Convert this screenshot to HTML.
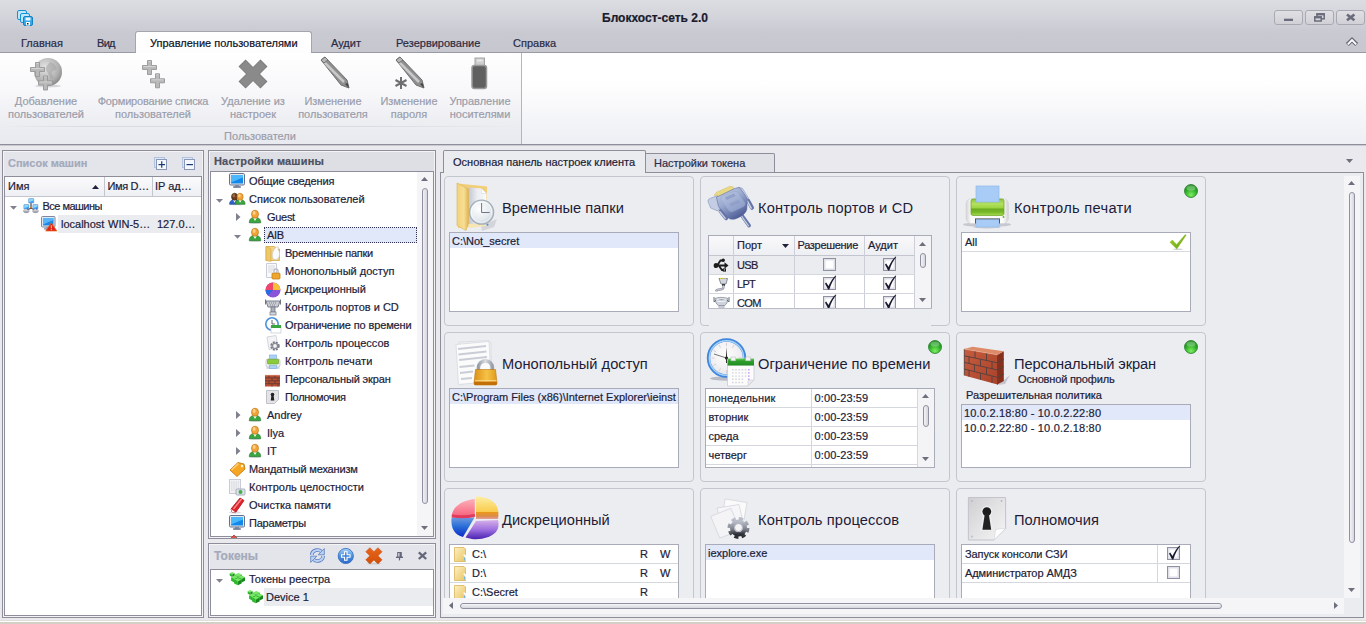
<!DOCTYPE html><html><head><meta charset="utf-8"><title>Блокхост-сеть 2.0</title><style>
*{box-sizing:border-box;margin:0;padding:0}
html,body{width:1366px;height:624px;overflow:hidden}
body{position:relative;background:#eaeaee;font-family:"Liberation Sans","DejaVu Sans",sans-serif;font-size:11px;color:#1c1c38;line-height:13px}
.a{position:absolute}
.t{position:absolute;white-space:nowrap;line-height:13px;-webkit-text-stroke:.2px}
.c{text-align:center}
.g{color:#9b9dab}
svg{position:absolute;overflow:visible}
#tb{left:0;top:0;width:1366px;height:53px;background:linear-gradient(#dcdde2,#d1d2d9 40%,#c8c9d1 64%,#c6c7cf);border-bottom:1px solid #9a9aa4}
.wb{top:10px;width:29px;height:15px;border:1px solid #a9a9b3;border-radius:3px;background:linear-gradient(#e0e0e4,#d0d0d6)}
#rb{left:0;top:53px;width:1366px;height:91px;background:linear-gradient(#ffffff,#fefefe 35%,#f4f5f8 72%,#eeeff4)}
#rg{left:0;top:53px;width:521px;height:91px;background:linear-gradient(#ffffff,#f7f7fa 45%,#ecedf1 80%,#e9eaef)}
.pn{border:1px solid #8d8e9a;background:#e4e5ea;box-shadow:inset 0 0 0 1px #f4f4f7}
.tr{border:1px solid #8d8e9a;background:#fff}
.card{border:1px solid #c4c6cf;border-radius:4px;background:#ecedf1;width:250px;height:150px}
.lb{border:1px solid #a9abb9;background:#fff}
.h1{font-size:14.67px;line-height:20px;color:#1c1c38;-webkit-text-stroke:0}
.sel{background:#e1e8fa}
.cb{width:13px;height:13px;border:1px solid #8f91a0;background:#fff;box-shadow:inset 0 0 0 2px #dcdde6}
</style></head><body><div id="tb" class="a"></div>
<svg style="left:17px;top:10px" width="16" height="16" viewBox="0 0 16 16"><rect x="0.5" y="0.5" width="9" height="9" rx="1.5" fill="#bfe6fb" stroke="#1592d6"/>
<rect x="3.5" y="3.5" width="9" height="9" rx="1.5" fill="#bfe6fb" stroke="#1592d6"/>
<rect x="6.5" y="6.5" width="9" height="9" rx="1.5" fill="#35a9e8" stroke="#1283c4"/>
<rect x="8.5" y="7.5" width="5" height="3" fill="#e8f6fe"/><rect x="9" y="12" width="4" height="3.5" fill="#fff"/><rect x="10" y="13" width="1.5" height="1.5" fill="#222"/></svg>
<div class="t c " style="left:505.0px;width:300px;top:12px;font-weight:bold;color:#1a1a2c;font-size:12px">Блокхост-сеть 2.0</div>
<div class="a wb" style="left:1274px"></div>
<div class="a wb" style="left:1305px"></div>
<div class="a wb" style="left:1336px"></div>
<svg style="left:0px;top:0px" width="1366" height="53" viewBox="0 0 1366 53"><rect x="1284" y="18.700" width="9" height="2.300" fill="#6a6c7c"/>
<rect x="1317" y="14" width="7.200" height="4.800" fill="none" stroke="#6a6c7c" stroke-width="1.500"/><rect x="1316.300" y="13.200" width="8.600" height="2.200" fill="#6a6c7c"/>
<rect x="1314.800" y="17" width="6.400" height="4" fill="#d6d6db" stroke="#6a6c7c" stroke-width="1.500"/><rect x="1314" y="16.200" width="8" height="2.200" fill="#6a6c7c"/>
<path d="M1347 14.500l7.400 5.800M1354.400 14.500l-7.400 5.800" stroke="#6a6c7c" stroke-width="2.700" fill="none"/></svg>
<div class="a " style="left:135px;top:31px;width:177px;height:23px;background:linear-gradient(#ffffff,#fdfdfe);border:1px solid #a5a5af;border-bottom:none;border-radius:3px 3px 0 0"></div>
<div class="t " style="left:21px;top:37px;color:#2a2a44">Главная</div>
<div class="t " style="left:97px;top:37px;color:#2a2a44;letter-spacing:-0.7px">Вид</div>
<div class="t " style="left:150px;top:37px;color:#101024">Управление пользователями</div>
<div class="t " style="left:331px;top:37px;color:#2a2a44">Аудит</div>
<div class="t " style="left:396px;top:37px;color:#2a2a44">Резервирование</div>
<div class="t " style="left:513px;top:37px;color:#2a2a44">Справка</div>
<svg style="left:0px;top:0px" width="1366" height="53" viewBox="0 0 1366 53"><path d="M1347.300 44.600l4.700-4.700l4.700 4.700" stroke="#6a6c7c" stroke-width="4.200" fill="none" stroke-linejoin="miter"/><path d="M1347.800 44.300l4.200-4.200l4.200 4.200" stroke="#fff" stroke-width="1.800" fill="none"/></svg>
<div id="rb" class="a"></div><div id="rg" class="a"></div>
<div class="a " style="left:521px;top:53px;width:1px;height:91px;background:#b4b5be"></div>
<div class="a " style="left:0px;top:144px;width:1366px;height:1px;background:#8e8f9a"></div>
<div class="a " style="left:0px;top:145px;width:1366px;height:1px;background:#c9cad2"></div>
<div class="a " style="left:5px;top:126px;width:512px;height:1px;background:linear-gradient(90deg,rgba(220,221,228,0),#d9dae2 15%,#d9dae2 70%,rgba(220,221,228,0))"></div>
<div class="t c g" style="left:-54.0px;width:200px;top:95px;">Добавление</div>
<div class="t c g" style="left:-54.0px;width:200px;top:108px;">пользователей</div>
<div class="t c g" style="left:53.0px;width:200px;top:95px;;letter-spacing:-0.18px">Формирование списка</div>
<div class="t c g" style="left:53.0px;width:200px;top:108px;">пользователей</div>
<div class="t c g" style="left:153.0px;width:200px;top:95px;">Удаление из</div>
<div class="t c g" style="left:153.0px;width:200px;top:108px;">настроек</div>
<div class="t c g" style="left:233.0px;width:200px;top:95px;">Изменение</div>
<div class="t c g" style="left:233.0px;width:200px;top:108px;">пользователя</div>
<div class="t c g" style="left:309.0px;width:200px;top:95px;">Изменение</div>
<div class="t c g" style="left:309.0px;width:200px;top:108px;">пароля</div>
<div class="t c g" style="left:380.0px;width:200px;top:95px;">Управление</div>
<div class="t c g" style="left:380.0px;width:200px;top:108px;">носителями</div>
<div class="t c g" style="left:160.0px;width:200px;top:130px;">Пользователи</div>
<svg style="left:0px;top:0px" width="1366" height="145" viewBox="0 0 1366 145"><defs><radialGradient id="gl" cx="0.4" cy="0.35" r="0.7"><stop offset="0" stop-color="#e6e6e6"/><stop offset=".7" stop-color="#b0b0b0"/><stop offset="1" stop-color="#858585"/></radialGradient></defs><ellipse cx="48" cy="86" rx="13" ry="1.500" fill="#d6d6da"/><circle cx="48" cy="72" r="14" fill="url(#gl)"/><path d="M50 62c4 1 6 4 7 7c-2 2-4 1-5 3c-1 3 2 4 1 7c-3 0-4-3-5-6c-1-2-3-3-2-6c1-2 3-3 4-5z" fill="#a2a2a2" opacity=".55"/><path d="M35.5 62.5h4v5.0h5.0v4h-5.0v5.0h-4v-5.0h-5.0v-4h5.0z" fill="#b9b9b9" stroke="#969696" stroke-width=".9"/><path d="M36.5 63.5h2M31.5 68.5h12" stroke="#d6d6d6" stroke-width=".9"/><path d="M43.5 76h4v5.0h5.0v4h-5.0v5.0h-4v-5.0h-5.0v-4h5.0z" fill="#b9b9b9" stroke="#969696" stroke-width=".9"/><path d="M44.5 77h2M39.5 82.0h12" stroke="#d6d6d6" stroke-width=".9"/><path d="M147.5 60.5h4v5.0h5.0v4h-5.0v5.0h-4v-5.0h-5.0v-4h5.0z" fill="#b9b9b9" stroke="#969696" stroke-width=".9"/><path d="M148.5 61.5h2M143.5 66.5h12" stroke="#d6d6d6" stroke-width=".9"/><path d="M155.5 73.8h4v5.0h5.0v4h-5.0v5.0h-4v-5.0h-5.0v-4h5.0z" fill="#b9b9b9" stroke="#969696" stroke-width=".9"/><path d="M156.5 74.8h2M151.5 79.8h12" stroke="#d6d6d6" stroke-width=".9"/><g transform="translate(253,74) rotate(45)"><path d="M-4.5 -15h9v10.5h10.5v9h-10.5v10.5h-9v-10.5h-10.5v-9h10.5z" fill="#8a8a8a" stroke="#7a7a7a"/></g><g transform="translate(318,57)"><path d="M3 3l4-3l22 23l2 8l-8-3z" fill="#8f8f8f" stroke="#707070" stroke-width="1"/><path d="M5 4l21 21" stroke="#c9c9c9" stroke-width="2.5"/><path d="M27 27l4 4l-1.500-5z" fill="#444"/><path d="M3 3l4-3l3 3l-4 3z" fill="#b5b5b5" stroke="#707070"/></g><g transform="translate(393,57)"><path d="M3 3l4-3l22 23l2 8l-8-3z" fill="#8f8f8f" stroke="#707070" stroke-width="1"/><path d="M5 4l21 21" stroke="#c9c9c9" stroke-width="2.5"/><path d="M27 27l4 4l-1.500-5z" fill="#444"/><path d="M3 3l4-3l3 3l-4 3z" fill="#b5b5b5" stroke="#707070"/></g><g stroke="#6f6f6f" stroke-width="2" transform="translate(401,83)"><path d="M0 -6v12M-5.500 -3l11 6M-5.500 3l11-6"/></g><rect x="475" y="58" width="9.500" height="9" fill="#cdcdcd" stroke="#a4a4a4"/><rect x="477" y="59.500" width="5.500" height="2" fill="#e9e9e9"/><rect x="472" y="65.500" width="14.500" height="23" rx="2.500" fill="#606060" stroke="#999" stroke-width="1.500"/></svg>
<div class="a pn" style="left:2px;top:150px;width:202px;height:468px;"></div>
<div class="t " style="left:8px;top:157px;font-weight:bold;color:#a4aabb">Список машин</div>
<svg style="left:154px;top:157px" width="14" height="14" viewBox="0 0 14 14"><rect x="0.5" y="0.5" width="10" height="10" fill="#dbe7f6" stroke="#b3c3dc"/><rect x="2.500" y="2.500" width="10" height="10" fill="#f4f8fd" stroke="#8a97b9"/><path d="M4.500 7.600h6.500" stroke="#1c3a70" stroke-width="1.200"/><path d="M7.750 4.300v6.500" stroke="#1c3a70" stroke-width="1.200"/></svg>
<svg style="left:182px;top:157px" width="14" height="14" viewBox="0 0 14 14"><rect x="0.5" y="0.5" width="10" height="10" fill="#dbe7f6" stroke="#b3c3dc"/><rect x="2.500" y="2.500" width="10" height="10" fill="#f4f8fd" stroke="#8a97b9"/><path d="M4.500 7.600h6.500" stroke="#1c3a70" stroke-width="1.200"/></svg>
<div class="a tr" style="left:4px;top:176px;width:198px;height:440px;"></div>
<div class="a " style="left:5px;top:177px;width:196px;height:20px;background:linear-gradient(#fbfbfc,#eeeff3);border-bottom:1px solid #c3c5cf"></div>
<div class="a " style="left:104px;top:177px;width:1px;height:19px;background:#c3c5cf"></div>
<div class="a " style="left:152px;top:177px;width:1px;height:19px;background:#c3c5cf"></div>
<div class="t " style="left:8px;top:180px;">Имя</div>
<div class="t " style="left:107.5px;top:180px;letter-spacing:-.35px">Имя D…</div>
<div class="t " style="left:155px;top:180px;">IP ад…</div>
<svg style="left:92px;top:185px" width="7" height="4" viewBox="0 0 7 4"><path d="M0 4L3.5 0L7 4z" fill="#20203a"/></svg>
<svg style="left:10.0px;top:206px" width="7" height="4" viewBox="0 0 7 4"><path d="M0 0L7 0L3.5 3.8z" fill="#7f818e"/></svg>
<svg style="left:23px;top:198px" width="16" height="16" viewBox="0 0 16 16"><defs><linearGradient id="nb" x1="0" y1="0" x2="0" y2="1"><stop offset="0" stop-color="#f4f4f8"/><stop offset="1" stop-color="#7d8090"/></linearGradient></defs><path d="M8 4.500v5.500M8 10l-3.500 2M8 10l3.500 2" stroke="#1c1c1c" stroke-width="1" fill="none"/><rect x="7.300" y="8.800" width="1.500" height="1.500" fill="#e8a020"/><rect x="7.500" y="9.600" width="1" height="1" fill="#e02020"/><rect x="5.6" y="0.5" width="5.200" height="4.600" rx=".6" fill="#3aa0f2" stroke="#7f9cc8" stroke-width=".5"/><path d="M6.1 1.0h4.200v1.600l-4.200 1.600z" fill="#9be0ff" opacity=".85"/><rect x="0.8" y="6.5" width="5.200" height="4.600" rx=".6" fill="#3aa0f2" stroke="#7f9cc8" stroke-width=".5"/><path d="M1.3 7.0h4.200v1.600l-4.200 1.600z" fill="#9be0ff" opacity=".85"/><rect x="9.8" y="6.5" width="5.200" height="4.600" rx=".6" fill="#3aa0f2" stroke="#7f9cc8" stroke-width=".5"/><path d="M10.3 7.0h4.200v1.600l-4.200 1.600z" fill="#9be0ff" opacity=".85"/><ellipse cx="3.300" cy="13" rx="3" ry="1.800" fill="url(#nb)" stroke="#8d90a0" stroke-width=".4"/><ellipse cx="12.500" cy="13" rx="3" ry="1.800" fill="url(#nb)" stroke="#8d90a0" stroke-width=".4"/><circle cx="4.600" cy="11" r=".5" fill="#1030c0"/><circle cx="13.700" cy="11" r=".5" fill="#1030c0"/></svg>
<div class="t " style="left:42.5px;top:200px;;letter-spacing:-0.53px">Все машины</div>
<div class="a " style="left:58px;top:215px;width:143px;height:18px;background:#ebecf0"></div>
<svg style="left:41px;top:216px" width="18" height="17" viewBox="0 0 18 17"><rect x="0.5" y="0.5" width="13.500" height="10.500" rx="1" fill="#e4e8ef" stroke="#7d879d"/>
<rect x="2" y="2" width="10.500" height="7.500" fill="#1e86e6"/><path d="M2 2h10.500v2l-10.500 4.500z" fill="#6cc4ff" opacity=".75"/>
<rect x="4.500" y="11" width="4" height="1.300" fill="#9aa3b5"/><rect x="3" y="12.300" width="7" height="1.200" fill="#7e8799"/>
<path d="M10.300 6.800l5.600 8.200h-11.200z" fill="#e8201c" stroke="#e06a1c" stroke-width=".7" stroke-linejoin="round"/><rect x="9.800" y="9.300" width="1.100" height="3" fill="#c8e83a"/><rect x="9.800" y="13" width="1.100" height="1.100" fill="#c8e83a"/></svg>
<div class="t " style="left:61px;top:218px;">localhost</div>
<div class="t " style="left:108px;top:218px;">WIN-5…</div>
<div class="t " style="left:157px;top:218px;">127.0…</div>
<div class="a pn" style="left:208px;top:150px;width:228px;height:389px;background:#dedfe4"></div>
<div class="t " style="left:214px;top:155px;font-weight:bold;color:#4d5160;letter-spacing:0.18px">Настройки машины</div>
<div class="a tr" style="left:210px;top:171px;width:224px;height:366px;overflow:hidden"></div>
<svg style="left:229px;top:173px" width="16" height="17" viewBox="0 0 16 17"><rect x="0.5" y="0.5" width="15" height="11.500" rx="1.200" fill="#e4e9f0" stroke="#64708a"/>
<rect x="2" y="2" width="12" height="8.500" fill="#1487ea"/><path d="M2 2h12v2.500l-12 5z" fill="#58c4ff" opacity=".8"/>
<rect x="6" y="12" width="4" height="1.500" fill="#7f8aa2"/><rect x="4" y="13.300" width="8" height="1.400" rx=".7" fill="#5f6c88"/></svg>
<div class="t " style="left:249px;top:175px;;letter-spacing:-0.12px">Общие сведения</div>
<svg style="left:216.0px;top:199.3px" width="7" height="4" viewBox="0 0 7 4"><path d="M0 0L7 0L3.5 3.8z" fill="#7f818e"/></svg>
<svg style="left:228px;top:191px" width="20" height="17" viewBox="0 0 20 17"><g transform="translate(0,1.6) scale(0.88)"><ellipse cx="7.500" cy="13.300" rx="5.800" ry="1" fill="#bfc0ca" opacity=".7"/><path d="M1.800 13.200c0-3.400 1.700-5.200 5.700-5.200s5.700 1.800 5.700 5.200z" fill="#2f62d0" stroke="#1c3f98" stroke-width=".7"/>
<path d="M5.800 8.400l1.700 3.200l1.700-3.200z" fill="#fff"/>
<ellipse cx="7.500" cy="4.700" rx="3.500" ry="4" fill="#6b3c1c" stroke="#3c200c" stroke-width=".7"/><ellipse cx="6.600" cy="3.500" rx="1.500" ry="1.900" fill="#a8744a" opacity=".85"/></g><g transform="translate(5.5,1.6) scale(0.88)"><ellipse cx="7.500" cy="13.300" rx="5.800" ry="1" fill="#bfc0ca" opacity=".7"/><path d="M1.800 13.200c0-3.400 1.700-5.200 5.700-5.200s5.700 1.800 5.700 5.200z" fill="#3aa640" stroke="#2a7a30" stroke-width=".7"/>
<path d="M5.800 8.400l1.700 3.200l1.700-3.200z" fill="#fff"/>
<ellipse cx="7.500" cy="4.700" rx="3.500" ry="4" fill="#f2a43a" stroke="#bd7716" stroke-width=".7"/><ellipse cx="6.600" cy="3.500" rx="1.500" ry="1.900" fill="#ffd894" opacity=".85"/></g></svg>
<div class="t " style="left:249px;top:193px;">Список пользователей</div>
<svg style="left:236px;top:213px" width="5" height="8" viewBox="0 0 5 8"><path d="M0 0L0 8L4.5 4z" fill="#7f818e"/></svg>
<svg style="left:247px;top:209px" width="16" height="17" viewBox="0 0 16 17"><g transform="translate(0.5,0.5) scale(1)"><ellipse cx="7.500" cy="13.300" rx="5.800" ry="1" fill="#bfc0ca" opacity=".7"/><path d="M1.800 13.200c0-3.400 1.700-5.200 5.700-5.200s5.700 1.800 5.700 5.200z" fill="#3aa640" stroke="#2a7a30" stroke-width=".7"/>
<path d="M5.800 8.400l1.700 3.200l1.700-3.200z" fill="#fff"/>
<ellipse cx="7.500" cy="4.700" rx="3.500" ry="4" fill="#f2a43a" stroke="#bd7716" stroke-width=".7"/><ellipse cx="6.600" cy="3.500" rx="1.500" ry="1.900" fill="#ffd894" opacity=".85"/></g></svg>
<div class="t " style="left:267px;top:211px;;letter-spacing:-0.3px">Guest</div>
<svg style="left:234.0px;top:235.3px" width="7" height="4" viewBox="0 0 7 4"><path d="M0 0L7 0L3.5 3.8z" fill="#7f818e"/></svg>
<svg style="left:247px;top:227px" width="16" height="17" viewBox="0 0 16 17"><g transform="translate(0.5,0.5) scale(1)"><ellipse cx="7.500" cy="13.300" rx="5.800" ry="1" fill="#bfc0ca" opacity=".7"/><path d="M1.800 13.200c0-3.400 1.700-5.200 5.700-5.200s5.700 1.800 5.700 5.200z" fill="#3aa640" stroke="#2a7a30" stroke-width=".7"/>
<path d="M5.800 8.400l1.700 3.200l1.700-3.200z" fill="#fff"/>
<ellipse cx="7.500" cy="4.700" rx="3.500" ry="4" fill="#f2a43a" stroke="#bd7716" stroke-width=".7"/><ellipse cx="6.600" cy="3.500" rx="1.500" ry="1.900" fill="#ffd894" opacity=".85"/></g></svg>
<div class="a " style="left:264px;top:227px;width:153px;height:16px;background:#e1e8fa;border:1px dotted #333350"></div>
<div class="t " style="left:267px;top:229px;;letter-spacing:-0.3px">AIB</div>
<svg style="left:265px;top:245px" width="16" height="17" viewBox="0 0 16 17"><path d="M1 1.500h8.500l3 2.500h2v11.500h-13.500z" fill="#f2d384" stroke="#d3aa4a" stroke-width=".8"/><path d="M1 1.500l5 2.500v12.500l-5-1z" fill="#eec766" stroke="#d3aa4a" stroke-width=".6"/>
<path d="M9.500 4c1.500-2 3-2.500 4-2l-.5 3c2 1.500 2 6 0 8.500c-1.500 1.500-3.500 1.500-5 0c-1-2-1-6 1.500-9.500z" fill="#fbfbfc" stroke="#c3c6cf" stroke-width=".6"/></svg>
<div class="t " style="left:285px;top:247px;;letter-spacing:-0.23px">Временные папки</div>
<svg style="left:265px;top:263px" width="16" height="17" viewBox="0 0 16 17"><path d="M1.500 0.500h10v14h-10z" fill="#fafafa" stroke="#c9ccd6"/><path d="M3 3h7M3 5h7M3 7h7M3 9h4" stroke="#d5d7df"/>
<rect x="7" y="10" width="8" height="6" rx="1" fill="#f0a52e" stroke="#c07d14" stroke-width=".8"/><path d="M9 10v-2a2 2 0 0 1 4 0v2" fill="none" stroke="#b9bcc8" stroke-width="1.300"/></svg>
<div class="t " style="left:285px;top:265px;">Монопольный доступ</div>
<svg style="left:265px;top:281px" width="16" height="17" viewBox="0 0 16 17"><circle cx="8" cy="9" r="7.500" fill="#8b55d9"/><path d="M8 9v-7.500a7.500 7.500 0 0 1 7.500 7.500z" fill="#f7c035"/><path d="M8 9h-7.500a7.500 7.500 0 0 1 7.500 -7.500z" fill="#f0466e"/><path d="M8 9l-5 5.500a7.500 7.500 0 0 1 -2.500 -5.500z" fill="#2a6ae0"/></svg>
<div class="t " style="left:285px;top:283px;">Дискреционный</div>
<svg style="left:265px;top:299px" width="16" height="17" viewBox="0 0 16 17"><path d="M1 2h14l-2 6h-10z" fill="#c9ccd3" stroke="#6f7480" stroke-width=".9"/><path d="M4 4h8M5 6h6" stroke="#7f8490" stroke-width="1" stroke-dasharray="1 1"/><rect x="6" y="8" width="4" height="5" fill="#aeb2bc" stroke="#6f7480" stroke-width=".8"/><rect x="5" y="13" width="6" height="3" fill="#d5d7de" stroke="#7f8490" stroke-width=".8"/><path d="M0.500 0.500v5M15.500 0.500v5" stroke="#6f7480"/></svg>
<div class="t " style="left:285px;top:301px;">Контроль портов и CD</div>
<svg style="left:265px;top:317px" width="16" height="17" viewBox="0 0 16 17"><circle cx="7" cy="7" r="6.200" fill="#fff" stroke="#4a92d9" stroke-width="1.600"/><path d="M7 3v4h3" stroke="#666" stroke-width="1" fill="none"/>
<rect x="6" y="9" width="10" height="7" fill="#fff" stroke="#c9ccd6" stroke-width=".8"/><rect x="6" y="8" width="10" height="3" fill="#3aa53f"/></svg>
<div class="t " style="left:285px;top:319px;;letter-spacing:-0.13px">Ограничение по времени</div>
<svg style="left:265px;top:335px" width="16" height="17" viewBox="0 0 16 17"><path d="M2 2l9-1.500l2 12l-9 2z" fill="#f4f4f6" stroke="#c9ccd6" stroke-width=".8"/><circle cx="10" cy="11" r="3.500" fill="none" stroke="#777a85" stroke-width="2.400" stroke-dasharray="1.800 1"/><circle cx="10" cy="11" r="2.600" fill="none" stroke="#8a8d98" stroke-width="1.400"/></svg>
<div class="t " style="left:285px;top:337px;">Контроль процессов</div>
<svg style="left:265px;top:353px" width="16" height="17" viewBox="0 0 16 17"><ellipse cx="8" cy="15" rx="7" ry="1" fill="#c9cad2"/><rect x="4.500" y="2" width="7" height="5" fill="#a9d2f5" stroke="#86b4e2" stroke-width=".7"/><rect x="1" y="6" width="14" height="8" rx="2" fill="#f1f1f3" stroke="#b9bcc6" stroke-width=".7"/><rect x="2.500" y="6.300" width="11" height="4.700" rx=".8" fill="#8ccc3c" stroke="#5f9e22" stroke-width=".6"/><rect x="4.500" y="12.500" width="7" height="3" fill="#a9d2f5" stroke="#86b4e2" stroke-width=".7"/></svg>
<div class="t " style="left:285px;top:355px;;letter-spacing:0.14px">Контроль печати</div>
<svg style="left:265px;top:371px" width="16" height="17" viewBox="0 0 16 17"><rect x="0" y="4" width="15" height="11.500" fill="#b84e32"/><path d="M0 6.900h15M0 9.800h15M0 12.700h15M4 4v2.900M10 4v2.900M7 6.900v2.900M13 6.900v2.900M4 9.800v2.900M10 9.800v2.900M7 12.700v2.800M13 12.700v2.800" stroke="#5c3a34" stroke-width=".8"/><path d="M0 4.300h15" stroke="#e39a7c" stroke-width=".7"/></svg>
<div class="t " style="left:285px;top:373px;;letter-spacing:-0.14px">Персональный экран</div>
<svg style="left:265px;top:389px" width="16" height="17" viewBox="0 0 16 17"><path d="M1.500 1.500h12v9l-4 4h-8z" fill="#e4e4e6" stroke="#b9bcc4" stroke-width=".9"/><circle cx="7.500" cy="5.500" r="1.800" fill="#222"/><path d="M6.500 6l-.8 5.500h3.600l-.8-5.500z" fill="#222"/></svg>
<div class="t " style="left:285px;top:391px;;letter-spacing:-0.29px">Полномочия</div>
<svg style="left:236px;top:411px" width="5" height="8" viewBox="0 0 5 8"><path d="M0 0L0 8L4.5 4z" fill="#7f818e"/></svg>
<svg style="left:247px;top:407px" width="16" height="17" viewBox="0 0 16 17"><g transform="translate(0.5,0.5) scale(1)"><ellipse cx="7.500" cy="13.300" rx="5.800" ry="1" fill="#bfc0ca" opacity=".7"/><path d="M1.800 13.200c0-3.400 1.700-5.200 5.700-5.200s5.700 1.800 5.700 5.200z" fill="#3aa640" stroke="#2a7a30" stroke-width=".7"/>
<path d="M5.800 8.400l1.700 3.200l1.700-3.200z" fill="#fff"/>
<ellipse cx="7.500" cy="4.700" rx="3.500" ry="4" fill="#f2a43a" stroke="#bd7716" stroke-width=".7"/><ellipse cx="6.600" cy="3.500" rx="1.500" ry="1.900" fill="#ffd894" opacity=".85"/></g></svg>
<div class="t " style="left:267px;top:409px;">Andrey</div>
<svg style="left:236px;top:429px" width="5" height="8" viewBox="0 0 5 8"><path d="M0 0L0 8L4.5 4z" fill="#7f818e"/></svg>
<svg style="left:247px;top:425px" width="16" height="17" viewBox="0 0 16 17"><g transform="translate(0.5,0.5) scale(1)"><ellipse cx="7.500" cy="13.300" rx="5.800" ry="1" fill="#bfc0ca" opacity=".7"/><path d="M1.800 13.200c0-3.400 1.700-5.200 5.700-5.200s5.700 1.800 5.700 5.200z" fill="#3aa640" stroke="#2a7a30" stroke-width=".7"/>
<path d="M5.800 8.400l1.700 3.200l1.700-3.200z" fill="#fff"/>
<ellipse cx="7.500" cy="4.700" rx="3.500" ry="4" fill="#f2a43a" stroke="#bd7716" stroke-width=".7"/><ellipse cx="6.600" cy="3.500" rx="1.500" ry="1.900" fill="#ffd894" opacity=".85"/></g></svg>
<div class="t " style="left:267px;top:427px;">Ilya</div>
<svg style="left:236px;top:447px" width="5" height="8" viewBox="0 0 5 8"><path d="M0 0L0 8L4.5 4z" fill="#7f818e"/></svg>
<svg style="left:247px;top:443px" width="16" height="17" viewBox="0 0 16 17"><g transform="translate(0.5,0.5) scale(1)"><ellipse cx="7.500" cy="13.300" rx="5.800" ry="1" fill="#bfc0ca" opacity=".7"/><path d="M1.800 13.200c0-3.400 1.700-5.200 5.700-5.200s5.700 1.800 5.700 5.200z" fill="#3aa640" stroke="#2a7a30" stroke-width=".7"/>
<path d="M5.800 8.400l1.700 3.200l1.700-3.200z" fill="#fff"/>
<ellipse cx="7.500" cy="4.700" rx="3.500" ry="4" fill="#f2a43a" stroke="#bd7716" stroke-width=".7"/><ellipse cx="6.600" cy="3.500" rx="1.500" ry="1.900" fill="#ffd894" opacity=".85"/></g></svg>
<div class="t " style="left:267px;top:445px;">IT</div>
<svg style="left:229px;top:461px" width="17" height="17" viewBox="0 0 17 17"><path d="M1 9l8-7.500l6 1.500l1 5l-8 7.500z" fill="#f5a623" stroke="#c47d0e" stroke-width=".9"/><path d="M2.500 9l7-6.500" stroke="#ffd27a" stroke-width="1.500"/><circle cx="13" cy="5" r="1.200" fill="#fff7e0"/></svg>
<div class="t " style="left:249px;top:463px;;letter-spacing:-0.17px">Мандатный механизм</div>
<svg style="left:229px;top:479px" width="16" height="17" viewBox="0 0 16 17"><rect x="0.500" y="0.500" width="11" height="14" fill="#f1f1f3" stroke="#c9ccd6"/><path d="M2 3h8M2 5h8M2 7h8M2 9h8M2 11h5" stroke="#d0d2da" stroke-dasharray="1.500 .8"/><rect x="7" y="10" width="9" height="6" rx="1" fill="#dfe3ea" stroke="#9aa0b0" stroke-width=".8"/><circle cx="11.500" cy="13" r="2" fill="#44b04a"/></svg>
<div class="t " style="left:249px;top:481px;">Контроль целостности</div>
<svg style="left:229px;top:497px" width="16" height="17" viewBox="0 0 16 17"><ellipse cx="6" cy="15.500" rx="6" ry="1.200" fill="#d9d9de"/><path d="M2 12l9-11l4 2.500l-8 11.500l-4 0z" fill="#e0222c" stroke="#a8141c" stroke-width=".8"/><path d="M4.500 12l8-10" stroke="#ff8d8d" stroke-width="1.300"/><path d="M2 12l4 3h-3z" fill="#f4f4f4"/></svg>
<div class="t " style="left:249px;top:499px;">Очистка памяти</div>
<svg style="left:229px;top:515px" width="16" height="17" viewBox="0 0 16 17"><rect x="0.5" y="0.5" width="15" height="11.500" rx="1.200" fill="#e4e9f0" stroke="#64708a"/>
<rect x="2" y="2" width="12" height="8.500" fill="#1487ea"/><path d="M2 2h12v2.500l-12 5z" fill="#58c4ff" opacity=".8"/>
<rect x="6" y="12" width="4" height="1.500" fill="#7f8aa2"/><rect x="4" y="13.300" width="8" height="1.400" rx=".7" fill="#5f6c88"/></svg>
<div class="t " style="left:249px;top:517px;;letter-spacing:-0.2px">Параметры</div>
<svg style="left:229px;top:532px" width="16" height="6" viewBox="0 0 16 6"><path d="M2 6l3-3l3 3" fill="#d9534a" stroke="#b23c2e" stroke-width=".8"/></svg>
<div class="a " style="left:417px;top:172px;width:16px;height:364px;background:#f5f5f7"></div>
<svg style="left:421px;top:177px" width="7" height="4" viewBox="0 0 7 4"><path d="M0 4L3.5 0L7 4z" fill="#6d6f7d"/></svg>
<svg style="left:421px;top:526px" width="7" height="4" viewBox="0 0 7 4"><path d="M0 0L7 0L3.5 4z" fill="#6d6f7d"/></svg>
<div class="a " style="left:422px;top:188px;width:6px;height:316px;border:1px solid #8f91a0;border-radius:3px;background:linear-gradient(90deg,#f0f0f4,#d5d6de)"></div>
<div class="a pn" style="left:208px;top:543px;width:228px;height:75px;"></div>
<div class="t " style="left:214px;top:550px;font-weight:bold;color:#a4aabb;font-size:12px">Токены</div>
<svg style="left:0px;top:0px" width="1366" height="624" viewBox="0 0 1366 624"><g transform="translate(309.500,548)"><path d="M2.300 7a5.600 5.200 0 0 1 9.800 -3.200" fill="none" stroke="#5a7ec2" stroke-width="3.6"/><path d="M13.700 8a5.600 5.200 0 0 1 -9.800 3.200" fill="none" stroke="#5a7ec2" stroke-width="3.6"/><path d="M2.300 7a5.600 5.200 0 0 1 9.800 -3.200" fill="none" stroke="#bdd2f1" stroke-width="2.0"/><path d="M13.700 8a5.600 5.200 0 0 1 -9.800 3.200" fill="none" stroke="#bdd2f1" stroke-width="2.0"/><path d="M14.800 .6v6.200h-6.200z" fill="#bdd2f1" stroke="#5a7ec2" stroke-width=".8"/><path d="M1.200 14.400v-6.200h6.200z" fill="#bdd2f1" stroke="#5a7ec2" stroke-width=".8"/></g><defs><linearGradient id="pc" x1="0" y1="0" x2="0" y2="1"><stop offset="0" stop-color="#a9d3f7"/><stop offset=".5" stop-color="#4f93e0"/><stop offset="1" stop-color="#2a66c8"/></linearGradient></defs><circle cx="345.800" cy="556" r="7.600" fill="url(#pc)" stroke="#3a6fc0" stroke-width=".9"/><path d="M345.800 551.200v9.600M341 556h9.600" stroke="#fff" stroke-width="3.600"/><path d="M345.800 552.300v7.400M342.100 556h7.400" stroke="#3f82d8" stroke-width="1.400"/><defs><linearGradient id="ox" x1="0" y1="0" x2="1" y2="1"><stop offset="0" stop-color="#ee6a1e"/><stop offset="1" stop-color="#cc4a06"/></linearGradient></defs><ellipse cx="374" cy="563.600" rx="7.500" ry=".8" fill="#c9cad2"/><g transform="translate(373.900,555.800) rotate(45)"><path d="M-2.900 -8.600h5.800v5.700h5.700v5.800h-5.700v5.700h-5.800v-5.700h-5.700v-5.800h5.700z" fill="url(#ox)" stroke="#c84a08" stroke-width=".5"/></g><g fill="#64667a"><rect x="397.200" y="552" width="4.600" height="5"/><rect x="396" y="556.600" width="7" height="1.400"/><rect x="398.900" y="558" width="1.200" height="2.400"/><rect x="398.200" y="553" width="1.300" height="3.500" fill="#d5d6de"/></g><path d="M418.800 552.400l7.400 6.600M426.200 552.400l-7.400 6.600" stroke="#64667a" stroke-width="2.300"/></svg>
<div class="a tr" style="left:210px;top:569px;width:224px;height:47px;"></div>
<svg style="left:216.0px;top:578.7px" width="7" height="4" viewBox="0 0 7 4"><path d="M0 0L7 0L3.5 3.8z" fill="#7f818e"/></svg>
<svg style="left:229px;top:571px" width="16" height="17" viewBox="0 0 16 17"><path d="M3.2 0.8999999999999999L5.7 2.15L3.2 3.4L0.7000000000000002 2.15z" fill="#74e862"/><path d="M0.7000000000000002 2.15L3.2 3.4L3.2 5.9L0.7000000000000002 4.65z" fill="#2db82d"/><path d="M5.7 2.15L3.2 3.4L3.2 5.9L5.7 4.65z" fill="#178a1b"/><path d="M9.3 1.8999999999999995L13.0 3.7499999999999996L9.3 5.6L5.6000000000000005 3.7499999999999996z" fill="#74e862"/><path d="M5.6000000000000005 3.7499999999999996L9.3 5.6L9.3 9.3L5.6000000000000005 7.449999999999999z" fill="#2db82d"/><path d="M13.0 3.7499999999999996L9.3 5.6L9.3 9.3L13.0 7.449999999999999z" fill="#178a1b"/><path d="M5.8 4.3L9.5 6.15L5.8 8L2.0999999999999996 6.15z" fill="#74e862"/><path d="M2.0999999999999996 6.15L5.8 8L5.8 11.7L2.0999999999999996 9.85z" fill="#2db82d"/><path d="M9.5 6.15L5.8 8L5.8 11.7L9.5 9.85z" fill="#178a1b"/><path d="M12.3 4.3L16.0 6.15L12.3 8L8.600000000000001 6.15z" fill="#74e862"/><path d="M8.600000000000001 6.15L12.3 8L12.3 11.7L8.600000000000001 9.85z" fill="#2db82d"/><path d="M16.0 6.15L12.3 8L12.3 11.7L16.0 9.85z" fill="#178a1b"/><path d="M8.8 6.8999999999999995L12.5 8.75L8.8 10.6L5.1000000000000005 8.75z" fill="#74e862"/><path d="M5.1000000000000005 8.75L8.8 10.6L8.8 14.3L5.1000000000000005 12.45z" fill="#2db82d"/><path d="M12.5 8.75L8.8 10.6L8.8 14.3L12.5 12.45z" fill="#178a1b"/></svg>
<div class="t " style="left:249px;top:573px;">Токены реестра</div>
<div class="a " style="left:264px;top:588px;width:169px;height:18px;background:#ebecf0"></div>
<svg style="left:247px;top:589px" width="16" height="17" viewBox="0 0 16 17"><path d="M3.2 0.8999999999999999L5.7 2.15L3.2 3.4L0.7000000000000002 2.15z" fill="#74e862"/><path d="M0.7000000000000002 2.15L3.2 3.4L3.2 5.9L0.7000000000000002 4.65z" fill="#2db82d"/><path d="M5.7 2.15L3.2 3.4L3.2 5.9L5.7 4.65z" fill="#178a1b"/><path d="M9.3 1.8999999999999995L13.0 3.7499999999999996L9.3 5.6L5.6000000000000005 3.7499999999999996z" fill="#74e862"/><path d="M5.6000000000000005 3.7499999999999996L9.3 5.6L9.3 9.3L5.6000000000000005 7.449999999999999z" fill="#2db82d"/><path d="M13.0 3.7499999999999996L9.3 5.6L9.3 9.3L13.0 7.449999999999999z" fill="#178a1b"/><path d="M5.8 4.3L9.5 6.15L5.8 8L2.0999999999999996 6.15z" fill="#74e862"/><path d="M2.0999999999999996 6.15L5.8 8L5.8 11.7L2.0999999999999996 9.85z" fill="#2db82d"/><path d="M9.5 6.15L5.8 8L5.8 11.7L9.5 9.85z" fill="#178a1b"/><path d="M12.3 4.3L16.0 6.15L12.3 8L8.600000000000001 6.15z" fill="#74e862"/><path d="M8.600000000000001 6.15L12.3 8L12.3 11.7L8.600000000000001 9.85z" fill="#2db82d"/><path d="M16.0 6.15L12.3 8L12.3 11.7L16.0 9.85z" fill="#178a1b"/><path d="M8.8 6.8999999999999995L12.5 8.75L8.8 10.6L5.1000000000000005 8.75z" fill="#74e862"/><path d="M5.1000000000000005 8.75L8.8 10.6L8.8 14.3L5.1000000000000005 12.45z" fill="#2db82d"/><path d="M12.5 8.75L8.8 10.6L8.8 14.3L12.5 12.45z" fill="#178a1b"/></svg>
<div class="t " style="left:266px;top:591px;">Device 1</div>
<div class="a " style="left:440px;top:172px;width:924px;height:446px;border:1px solid #8d8e9a;background:#ebecf0"></div>
<div class="a " style="left:443px;top:150px;width:203px;height:23px;border:1px solid #8d8e9a;border-bottom:none;background:#ebecf0;border-radius:2px 2px 0 0"></div>
<div class="a " style="left:646px;top:153px;width:129px;height:19px;border:1px solid #8d8e9a;border-left:none;border-bottom:none;background:#e1e2e7;border-radius:0 2px 0 0"></div>
<div class="t " style="left:453px;top:156px;">Основная панель настроек клиента</div>
<div class="t " style="left:654px;top:157px;color:#2c2c48">Настройки токена</div>
<svg style="left:1346px;top:159px" width="7" height="4" viewBox="0 0 7 4"><path d="M0 0L7 0L3.5 4z" fill="#6d6f7d"/></svg>
<div class="a" style="left:441px;top:173px;width:903px;height:425px;overflow:hidden">
<div class="a card" style="left:3px;top:3px;width:250px;height:150px;"></div>
<svg style="left:3px;top:3px" width="70" height="64" viewBox="0 0 70 64"><defs><linearGradient id="bf" x1="0" x2="1"><stop offset="0" stop-color="#f3d27a"/><stop offset=".6" stop-color="#f7de95"/><stop offset="1" stop-color="#e2b44e"/></linearGradient><radialGradient id="ck" cx=".4" cy=".35" r=".8"><stop offset="0" stop-color="#ffffff"/><stop offset=".6" stop-color="#e3e9ee"/><stop offset="1" stop-color="#b5c0cb"/></radialGradient>
<linearGradient id="pp" x1="0" x2="1"><stop offset="0" stop-color="#c3c7d3"/><stop offset=".5" stop-color="#eceef3"/><stop offset="1" stop-color="#fafafc"/></linearGradient></defs>
<path d="M37 50l16-7l-3 8l-12 4z" fill="#c9cad2" opacity=".7"/>
<path d="M14 7.500l29 3v38l-29 3.500z" fill="#f1cf79"/>
<path d="M24.500 11.500l13 1l5 5v30l-18 2z" fill="url(#pp)"/><path d="M37.500 12.500v5h5z" fill="#fff" stroke="#cfd2da" stroke-width=".5"/>
<path d="M24 48l18-1v3l-17 2z" fill="#f7e6b3"/>
<path d="M13 7l11.500 6v34l-2.500 7.500l-9-5z" fill="url(#bf)" stroke="#d9b152" stroke-width=".6"/>
<circle cx="37.600" cy="36.200" r="12" fill="url(#ck)" stroke="#a3aebb" stroke-width="1.300"/><circle cx="37.600" cy="36.200" r="10.200" fill="none" stroke="#fff" stroke-width=".8" opacity=".8"/>
<path d="M37.600 27v9.500h8" stroke="#5d6877" stroke-width=".9" fill="none"/><circle cx="43.500" cy="48.800" r="1" fill="#4a8fe0"/></svg>
<div class="t h1" style="left:61px;top:25px">Временные папки</div>
<div class="a card" style="left:259px;top:3px;width:250px;height:150px;"></div>
<svg style="left:259px;top:3px" width="70" height="64" viewBox="0 0 70 64"><defs><linearGradient id="bp" x1="0" y1="0" x2=".6" y2="1"><stop offset="0" stop-color="#c9d2e8"/><stop offset=".5" stop-color="#9aa9cf"/><stop offset="1" stop-color="#4f5f98"/></linearGradient>
<linearGradient id="bp2" x1="0" y1="0" x2=".7" y2="1"><stop offset="0" stop-color="#bcc8e4"/><stop offset="1" stop-color="#8a9bc6"/></linearGradient></defs>
<g transform="translate(2,2) scale(.09615)">
<path d="M415 390l75 105" stroke="#6676a8" stroke-width="38" stroke-linecap="round"/><path d="M408 392l75 105" stroke="#c3cbe3" stroke-width="13" stroke-linecap="round"/>
<path d="M478 235l42 75" stroke="#6676a8" stroke-width="42" stroke-linecap="round"/><path d="M470 238l42 75" stroke="#cfd6ea" stroke-width="15" stroke-linecap="round"/>
<path d="M195 345l55 70" stroke="#6676a8" stroke-width="46" stroke-linecap="round"/><path d="M186 350l55 70" stroke="#c3cbe3" stroke-width="16" stroke-linecap="round"/>
<path d="M125 180l25-32l140-62l38 8l8 34l-160 75z" fill="#e9d985" stroke="#cdbb66" stroke-width="5"/>
<path d="M65 250c-8-15 0-30 20-38l75-28l45 110l-45 48l-70-30z" fill="#c3cde3" stroke="#7f8db8" stroke-width="6"/>
<path d="M378 95l42 12l62 100l-18 35z" fill="#c9d2e6" stroke="#7f8db8" stroke-width="6"/>
<path d="M150 200l180-86c25-12 45-15 62-12l38 50l40 62l-3 110c-10 40-40 62-70 78c-30 18-60 30-90 26c-20-2-30-8-40-20l-95-110z" fill="url(#bp)" stroke="#5a6a9c" stroke-width="6"/>
<path d="M215 188l112-46c20-6 36-4 46 8l70 105c8 14 4 32-12 42l-105 50c-18 8-36 4-48-8l-75-105c-10-16-8-36 12-46z" fill="url(#bp2)" stroke="#93a3cc" stroke-width="5"/>
<path d="M238 200l95-38l18 26l-95 40zM285 268l95-40l18 26l-95 42z" fill="#8e9ec6" opacity=".85"/>
</g></svg>
<div class="t h1" style="left:317px;top:25px;letter-spacing:0.18px">Контроль портов и CD</div>
<div class="a card" style="left:515px;top:3px;width:250px;height:150px;"></div>
<svg style="left:515px;top:3px" width="70" height="64" viewBox="0 0 70 64"><defs><linearGradient id="pg" x1="0" y1="0" x2="0" y2="1"><stop offset="0" stop-color="#8cc63f"/><stop offset=".3" stop-color="#b4e060"/><stop offset=".55" stop-color="#9ad33f"/><stop offset=".6" stop-color="#6aaa1f"/><stop offset=".8" stop-color="#78b828"/><stop offset="1" stop-color="#a8da50"/></linearGradient>
<linearGradient id="pb" x1="0" x2="1"><stop offset="0" stop-color="#d3d3d3"/><stop offset=".12" stop-color="#fafafa"/><stop offset=".88" stop-color="#fafafa"/><stop offset="1" stop-color="#d0d0d0"/></linearGradient></defs>
<ellipse cx="31" cy="48.500" rx="24" ry="2.500" fill="#c6c7cf"/><ellipse cx="31" cy="51" rx="14" ry="1.500" fill="#c9cad2"/>
<rect x="10" y="22.500" width="42.500" height="25" rx="5.500" fill="url(#pb)" stroke="#d3d4d8" stroke-width=".6"/>
<rect x="15" y="23" width="33" height="16.500" rx="2" fill="url(#pg)" stroke="#6aa520" stroke-width=".7"/>
<rect x="20" y="10" width="23" height="16" fill="#a8ccf6" stroke="#8fb9ea" stroke-width=".7"/>
<rect x="19" y="42.500" width="25" height="5" fill="#333"/><rect x="20" y="43.500" width="23" height="7.500" fill="#a8ccf6" stroke="#8fb9ea" stroke-width=".6"/>
<circle cx="47.500" cy="41" r=".9" fill="#5aaa2a"/></svg>
<div class="t h1" style="left:573px;top:25px;letter-spacing:0.29px">Контроль печати</div>
<svg style="left:743px;top:11px" width="14" height="14" viewBox="0 0 14 14"><defs><radialGradient id="gd" cx=".5" cy=".8" r=".75"><stop offset="0" stop-color="#7cf060"/><stop offset=".6" stop-color="#2fae2a"/><stop offset="1" stop-color="#1a8a1e"/></radialGradient></defs><circle cx="7" cy="7" r="6.500" fill="url(#gd)" stroke="#2a7d28" stroke-width=".8"/><ellipse cx="7" cy="4" rx="4.500" ry="2.600" fill="#fff" opacity=".28"/></svg>
<div class="a card" style="left:3px;top:159px;width:250px;height:150px;"></div>
<svg style="left:3px;top:159px" width="70" height="64" viewBox="0 0 70 64"><defs><linearGradient id="lk" x1="0" y1="0" x2="1" y2="0"><stop offset="0" stop-color="#dd8f16"/><stop offset=".55" stop-color="#f5c246"/><stop offset="1" stop-color="#e09a1c"/></linearGradient>
<linearGradient id="sh" x1="0" x2="1"><stop offset="0" stop-color="#9aa0ac"/><stop offset=".5" stop-color="#f4f5f7"/><stop offset="1" stop-color="#9aa0ac"/></linearGradient></defs>
<path d="M15 10l30-1.500l2 2l.5 38l-31 3.500z" fill="#eceef2" stroke="#d0d3da" stroke-width=".6"/>
<path d="M12 12.500l33-3l2 40l-32.500 3z" fill="#fbfbfc" stroke="#cfd2d9" stroke-width=".6"/>
<g stroke="#c5c9d2" stroke-width="2" opacity=".9"><path d="M14 17l28-3"/><path d="M14.500 22.500l28-3"/><path d="M15 28l28-3"/><path d="M15.500 35l15-1.500"/><path d="M16 41l13-1.500"/><path d="M17 47l11-1"/></g>
<path d="M34.400 39v-3.200a7 7 0 0 1 14 0v3.200" fill="none" stroke="url(#sh)" stroke-width="3.200"/><path d="M34.400 39v-3.200a7 7 0 0 1 14 0v3.200" fill="none" stroke="#8d93a0" stroke-width="4.200" opacity=".25"/>
<path d="M31.500 37.500h20l1.500 13.500c0 1.500-1 2-2 2h-19c-1.500 0-2-.5-2-2z" fill="url(#lk)" stroke="#b97512" stroke-width=".6"/>
<path d="M30.500 49.500h22l.5 2c0 1-1 1.500-2 1.500h-19c-1.500 0-2-.5-2-1.500z" fill="#c36f05"/><path d="M31 48.800h21.500" stroke="#ffe9a8" stroke-width=".9"/></svg>
<div class="t h1" style="left:61px;top:181px">Монопольный доступ</div>
<div class="a card" style="left:259px;top:159px;width:250px;height:150px;"></div>
<svg style="left:259px;top:159px" width="70" height="64" viewBox="0 0 70 64"><defs><radialGradient id="cf" cx=".45" cy=".4" r=".7"><stop offset="0" stop-color="#ffffff"/><stop offset="1" stop-color="#e6e2e6"/></radialGradient>
<linearGradient id="cg" x1="0" y1="0" x2="0" y2="1"><stop offset="0" stop-color="#6ad05a"/><stop offset=".35" stop-color="#2fa02c"/><stop offset="1" stop-color="#1f8a22"/></linearGradient></defs>
<ellipse cx="27" cy="46.500" rx="17" ry="2.200" fill="#b9bbc6"/>
<circle cx="26.500" cy="26" r="18" fill="url(#cf)" stroke="#3f86dc" stroke-width="3.400"/><circle cx="26.500" cy="26" r="17.200" fill="none" stroke="#a9d3f7" stroke-width="1.400"/>
<g stroke="#c9c5c9" stroke-width=".8"><path d="M26.500 11v3M26.500 38v3M11.500 26h3M38.500 26h3M19 13l1.500 2.600M34 13l-1.500 2.600M13.500 18.500l2.600 1.500M13.500 33.500l2.600-1.500M19 39l1.500-2.600"/></g>
<path d="M26.500 15l-.7 11h1.400z" fill="#333"/><path d="M26.500 26l-12.500-4" stroke="#555" stroke-width=".8"/><circle cx="26.500" cy="26" r="1.600" fill="#222"/><path d="M26.500 26v5" stroke="#333" stroke-width="1"/>
<path d="M27.500 33h26.500v15l-6 6h-20.500z" fill="#fcfcfc" stroke="#c3c5cc" stroke-width=".7"/><path d="M48 54v-5c0-1 .5-1 1.500-1h4.500z" fill="#e9e9ec" stroke="#c3c5cc" stroke-width=".5"/>
<path d="M27.500 26.500h26.500v7h-26.500z" fill="url(#cg)"/>
<rect x="31" y="25" width="4.600" height="3.800" fill="#f4f4f6" stroke="#b5b7c0" stroke-width=".5"/><rect x="45.800" y="25" width="4.600" height="3.800" fill="#f4f4f6" stroke="#b5b7c0" stroke-width=".5"/>
<g fill="#d6d6dc"><path d="M32 37h1.600v1.400h-1.600zM35.200 37h1.600v1.400h-1.600zM38.400 37h1.600v1.400h-1.600zM41.600 37h1.600v1.400h-1.600zM44.800 37h1.600v1.400h-1.600zM32 40.200h1.600v1.400h-1.600zM35.200 40.200h1.600v1.400h-1.600zM38.400 40.200h1.600v1.400h-1.600zM41.600 40.200h1.600v1.400h-1.600zM44.800 40.200h1.600v1.400h-1.600zM32 43.400h1.600v1.400h-1.600zM35.200 43.400h1.600v1.400h-1.600zM38.400 43.400h1.600v1.400h-1.600zM41.600 43.400h1.600v1.400h-1.600zM44.800 43.400h1.600v1.400h-1.600zM32 46.600h1.600v1.400h-1.600zM35.200 46.600h1.600v1.400h-1.600zM38.400 46.600h1.600v1.400h-1.600zM41.600 46.600h1.600v1.400h-1.600zM32 49.800h1.600v1.400h-1.600zM35.200 49.800h1.600v1.400h-1.600zM38.400 49.800h1.600v1.400h-1.600zM41.600 49.800h1.600v1.400h-1.600z"/></g>
<g fill="#cc99f5"><rect x="48" y="37" width="1.600" height="1.400"/><rect x="48" y="40.200" width="1.600" height="1.400"/><rect x="48" y="43.400" width="1.600" height="1.400"/><rect x="48" y="46.600" width="1.600" height="1.400"/></g></svg>
<div class="t h1" style="left:317px;top:181px">Ограничение по времени</div>
<svg style="left:487px;top:167px" width="14" height="14" viewBox="0 0 14 14"><defs><radialGradient id="gd" cx=".5" cy=".8" r=".75"><stop offset="0" stop-color="#7cf060"/><stop offset=".6" stop-color="#2fae2a"/><stop offset="1" stop-color="#1a8a1e"/></radialGradient></defs><circle cx="7" cy="7" r="6.500" fill="url(#gd)" stroke="#2a7d28" stroke-width=".8"/><ellipse cx="7" cy="4" rx="4.500" ry="2.600" fill="#fff" opacity=".28"/></svg>
<div class="a card" style="left:515px;top:159px;width:250px;height:150px;"></div>
<svg style="left:515px;top:159px" width="70" height="64" viewBox="0 0 70 64"><defs><linearGradient id="wf" x1="0" y1="0" x2="1" y2="1"><stop offset="0" stop-color="#c75c3e"/><stop offset="1" stop-color="#a8422a"/></linearGradient></defs>
<path d="M42 53l12-10l-5 9z" fill="#b9bac4" opacity=".8"/>
<path d="M8.300 17l33.200 5.800v29.800l-33.200-9.200z" fill="url(#wf)"/>
<path d="M41.500 22.800l6.300-3.500v29.800l-6.300 3.500z" fill="#85301c"/>
<path d="M8.300 17l8.200-2.200l31.300 4.500l-6.300 3.500z" fill="#dc8a68"/>
<g stroke="#54403e" stroke-width=".9" fill="none"><path d="M8.300 23.800l33.200 7l6.300-3.500M8.300 30.400l33.200 7.600l6.300-3.500M8.300 37l33.200 8.400l6.300-3.500"/>
<path d="M19 19v7M30.500 21v7.500M13 24.800v6.800M24.500 27.200v7M36 29.700v7.200M18.500 32.700v6.800M30.500 35.500v7M13 38.200v6.500M24.500 41v6.800M36 44v7M8.300 17v26.400M41.500 22.800v29.800"/></g>
<path d="M8.300 17l33.200 5.800" stroke="#e9a788" stroke-width=".8"/></svg>
<div class="t h1" style="left:573px;top:181px;letter-spacing:-0.11px">Персональный экран</div>
<svg style="left:743px;top:167px" width="14" height="14" viewBox="0 0 14 14"><defs><radialGradient id="gd" cx=".5" cy=".8" r=".75"><stop offset="0" stop-color="#7cf060"/><stop offset=".6" stop-color="#2fae2a"/><stop offset="1" stop-color="#1a8a1e"/></radialGradient></defs><circle cx="7" cy="7" r="6.500" fill="url(#gd)" stroke="#2a7d28" stroke-width=".8"/><ellipse cx="7" cy="4" rx="4.500" ry="2.600" fill="#fff" opacity=".28"/></svg>
<div class="a card" style="left:3px;top:315px;width:250px;height:150px;"></div>
<svg style="left:3px;top:315px" width="70" height="64" viewBox="0 0 70 64"><defs><linearGradient id="p1" x1="0" y1="0" x2="0" y2="1"><stop offset="0" stop-color="#fdeea0"/><stop offset="1" stop-color="#f9cb4c"/></linearGradient><linearGradient id="p1s" x1="0" y1="0" x2="0" y2="1"><stop offset="0" stop-color="#ec9a16"/><stop offset=".6" stop-color="#dc8a4a"/><stop offset="1" stop-color="#e4a0a0"/></linearGradient>
<linearGradient id="p2" x1="0" y1="0" x2="0" y2="1"><stop offset="0" stop-color="#fdb0b8"/><stop offset="1" stop-color="#f5607c"/></linearGradient>
<linearGradient id="p3" x1="0" y1="0" x2="0" y2="1"><stop offset="0" stop-color="#d8b0e8"/><stop offset=".5" stop-color="#9d6fe0"/><stop offset="1" stop-color="#4a22b0"/></linearGradient>
<linearGradient id="p4" x1="0" y1="0" x2="0" y2="1"><stop offset="0" stop-color="#6f9ae0"/><stop offset=".45" stop-color="#2a6fd8"/><stop offset="1" stop-color="#0a2cc8"/></linearGradient></defs>
<path d="M32 33l22-1c1 4 1 8-2 12c-5 5-14 8-24 7l-6.500-1.500z" fill="url(#p3)"/>
<path d="M7.500 29.500l23 0l-11.500 19.500c-8-2-12.500-8-11.500-19.500z" fill="url(#p4)"/>
<path d="M7.800 28.500c0-8 8-16 23-17.500v17c-8 1.500-16 1.500-23 .5z" fill="url(#p2)"/><path d="M7.800 26.500c7 1 15 1 23-.5v3c-8 1.500-16 1.500-23 .5z" fill="#e23a5c"/>
<path d="M32 8.500c12 0 22 6 22.300 15.500h-22.300z" fill="url(#p1)"/><path d="M32 24h22.300c.2 3 0 5-.3 7h-22z" fill="url(#p1s)"/></svg>
<div class="t h1" style="left:61px;top:337px">Дискреционный</div>
<div class="a card" style="left:259px;top:315px;width:250px;height:150px;"></div>
<svg style="left:259px;top:315px" width="70" height="64" viewBox="0 0 70 64"><defs><linearGradient id="gg" x1="0" y1="0" x2="0" y2="1"><stop offset="0" stop-color="#b9bdc8"/><stop offset=".6" stop-color="#7d818c"/><stop offset="1" stop-color="#2c2e36"/></linearGradient></defs>
<path d="M25 11l22 3.500l-3 17.500l-21.500-3z" fill="#fafafb" stroke="#c9cbd2" stroke-width=".6"/>
<path d="M17 20l22-3.500l3.500 15l-21 6z" fill="#f6f6f8" stroke="#c9cbd2" stroke-width=".6"/>
<path d="M10.700 28.400l20.100-8.100l9.700 22.100l-20.700 7.600z" fill="#f4f4f6" stroke="#c9cbd2" stroke-width=".6"/>
<circle cx="38.500" cy="40" r="8.200" fill="none" stroke="url(#gg)" stroke-width="5.500" stroke-dasharray="3.600 2.840"/>
<circle cx="38.500" cy="40" r="6.300" fill="none" stroke="url(#gg)" stroke-width="4.500"/>
<circle cx="38.500" cy="39.500" r="4" fill="#f4f4f6" stroke="#a5a9b4" stroke-width=".8"/></svg>
<div class="t h1" style="left:317px;top:337px;letter-spacing:0.12px">Контроль процессов</div>
<div class="a card" style="left:515px;top:315px;width:250px;height:150px;"></div>
<svg style="left:515px;top:315px" width="70" height="64" viewBox="0 0 70 64"><defs><linearGradient id="kp" x1="0" y1="0" x2="1" y2="1"><stop offset="0" stop-color="#cfcfd1"/><stop offset=".5" stop-color="#e3e3e5"/><stop offset="1" stop-color="#f4f4f5"/></linearGradient></defs>
<path d="M12.400 9.500h37.200v31l-11.500 11.500h-25.700z" fill="url(#kp)" stroke="#bfc0c6" stroke-width=".9"/>
<path d="M49.600 40.500c-4 0-8 .5-10 1c-.5 3-1 7-1.500 10.500z" fill="#fdfdfd" stroke="#c9cad0" stroke-width=".5"/>
<circle cx="30.800" cy="23.600" r="5.600" fill="#f1f1f3"/><path d="M27 26l-3 17h13.600l-3-17z" fill="#ededf0"/>
<circle cx="30.800" cy="23.600" r="4.400" fill="#1c1c1c"/><path d="M28.800 26l-2.400 15.800h8.800l-2.400-15.800z" fill="#222"/>
<g fill="#b9babf"><circle cx="16" cy="13" r=".9"/><circle cx="45.500" cy="13" r=".9"/><circle cx="16" cy="48.500" r=".9"/></g></svg>
<div class="t h1" style="left:573px;top:337px">Полномочия</div>
<div class="a lb" style="left:8px;top:59px;width:230px;height:80px;"></div>
<div class="a sel" style="left:9px;top:60px;width:228px;height:15px;"></div>
<div class="t " style="left:11px;top:62px;">C:\Not_secret</div>
<div class="a lb" style="left:8px;top:215px;width:230px;height:80px;"></div>
<div class="a sel" style="left:9px;top:216px;width:228px;height:15px;"></div>
<div class="t " style="left:11px;top:218px;">C:\Program Files (x86)\Internet Explorer\ieinst</div>
<div class="a lb" style="left:520px;top:59px;width:230px;height:80px;"></div>
<div class="a " style="left:521px;top:78px;width:228px;height:1px;background:#d7d9e1"></div>
<div class="t " style="left:524px;top:63px;">All</div>
<svg style="left:728px;top:60px" width="18" height="17" viewBox="0 0 18 17"><defs><linearGradient id="gc" x1="0" y1="0" x2="1" y2="1"><stop offset="0" stop-color="#9ad428"/><stop offset="1" stop-color="#6a9e10"/></linearGradient></defs><ellipse cx="9" cy="16.300" rx="5" ry=".7" fill="#d0d2d8"/><path d="M1 9.300L3.300 7L7.600 11.400L16.300 1.500L17.100 2.300L7.800 16z" fill="url(#gc)" stroke="#7cb018" stroke-width=".4"/></svg>
<div class="t " style="left:577px;top:200px;;letter-spacing:-0.16px">Основной профиль</div>
<div class="t " style="left:525px;top:216px;">Разрешительная политика</div>
<div class="a lb" style="left:520px;top:231px;width:230px;height:64px;"></div>
<div class="a sel" style="left:521px;top:232px;width:228px;height:15px;"></div>
<div class="t " style="left:523px;top:234px;;letter-spacing:0.19px">10.0.2.18:80 - 10.0.2.22:80</div>
<div class="t " style="left:523px;top:249px;;letter-spacing:0.19px">10.0.2.22:80 - 10.0.2.18:80</div>
<div class="a lb" style="left:264px;top:371px;width:230px;height:80px;"></div>
<div class="a sel" style="left:265px;top:372px;width:228px;height:15px;"></div>
<div class="t " style="left:267px;top:374px;">iexplore.exe</div>
<div class="a lb" style="left:267px;top:62px;width:224px;height:74px;overflow:hidden"></div>
<div class="a " style="left:268px;top:63px;width:206px;height:19px;background:linear-gradient(#f9f9fb,#eeeff3)"></div>
<div class="a " style="left:268px;top:82px;width:206px;height:1px;background:#c3c5cf"></div>
<div class="a " style="left:268px;top:83px;width:206px;height:18px;background:#ebecf0"></div>
<div class="a " style="left:292px;top:63px;width:1px;height:72px;background:#cdcfd8"></div>
<div class="a " style="left:353px;top:63px;width:1px;height:72px;background:#cdcfd8"></div>
<div class="a " style="left:423px;top:63px;width:1px;height:72px;background:#cdcfd8"></div>
<div class="a " style="left:473px;top:63px;width:1px;height:72px;background:#cdcfd8"></div>
<div class="a " style="left:268px;top:101px;width:206px;height:1px;background:#d5d7df"></div>
<div class="a " style="left:268px;top:120px;width:206px;height:1px;background:#d5d7df"></div>
<div class="t " style="left:296px;top:66px;">Порт</div>
<div class="t " style="left:356.5px;top:66px;;letter-spacing:-0.3px">Разрешение</div>
<div class="t " style="left:427px;top:66px;">Аудит</div>
<svg style="left:341px;top:71px" width="7" height="4" viewBox="0 0 7 4"><path d="M0 0L7 0L3.5 4z" fill="#20203a"/></svg>
<div class="t " style="left:296px;top:86px;;letter-spacing:-0.6px">USB</div>
<svg style="left:272px;top:85px" width="17" height="17" viewBox="0 0 17 17"><g stroke="#1c1c1c" stroke-width="1.900" fill="none" stroke-linecap="round"><path d="M2.500 7.500h10M4.500 7l3-4.500h2.500M6 8l3 4h1.500"/></g><ellipse cx="3" cy="7.500" rx="2.300" ry="2.600" fill="#1c1c1c"/><path d="M11.500 4.200l4 3.300l-4 3.300z" fill="#1c1c1c"/><circle cx="10.200" cy="2.300" r="1.700" fill="#1c1c1c"/><rect x="9.800" y="10.400" width="3.200" height="3.200" fill="#1c1c1c"/><rect x="10.800" y="11.300" width="1.200" height="1.200" fill="#bbb"/></svg>
<svg style="left:382px;top:85px" width="13" height="13" viewBox="0 0 13 13"><rect x="0.5" y="0.5" width="12" height="12" fill="#dfe0e8" stroke="#8f91a0"/><rect x="2.500" y="2.500" width="8" height="8" fill="#fff"/></svg>
<svg style="left:442px;top:85px" width="13" height="13" viewBox="0 0 13 13"><rect x="0.5" y="0.5" width="12" height="12" fill="#dfe0e8" stroke="#8f91a0"/><rect x="2.500" y="2.500" width="8" height="8" fill="#fff"/><path d="M2 6.500l1.200-1l2.300 3.500c2-4.500 4-7.500 7-10.500l.8.500c-3 3.500-5 7.500-7 13.500h-1.200z" fill="#1a1a30"/></svg>
<div class="t " style="left:296px;top:105px;;letter-spacing:-0.7px">LPT</div>
<svg style="left:272px;top:104px" width="17" height="17" viewBox="0 0 17 17"><path d="M6 1.500h8.500l-1.500 5.500h-5z" fill="#d3d6dc" stroke="#6f7480" stroke-width=".8"/><path d="M7 1.300h6.500" stroke="#e8dc3a" stroke-width="1.200" stroke-dasharray="1 .6"/><path d="M9 7h3v2h-3z" fill="#3c3e46"/><path d="M10.500 8.500v1.500c0 2-1.500 2.500-4 2.500c-2 0-3 .3-3.500 1.800" fill="none" stroke="#9a9da8" stroke-width="2.400"/><path d="M10.500 8.500v1.500c0 2-1.500 2.500-4 2.500c-2 0-3 .3-3.500 1.800" fill="none" stroke="#c9ccd4" stroke-width=".9"/></svg>
<svg style="left:382px;top:104px" width="13" height="13" viewBox="0 0 13 13"><rect x="0.5" y="0.5" width="12" height="12" fill="#dfe0e8" stroke="#8f91a0"/><rect x="2.500" y="2.500" width="8" height="8" fill="#fff"/><path d="M2 6.500l1.200-1l2.300 3.500c2-4.500 4-7.500 7-10.500l.8.500c-3 3.500-5 7.500-7 13.500h-1.200z" fill="#1a1a30"/></svg>
<svg style="left:442px;top:104px" width="13" height="13" viewBox="0 0 13 13"><rect x="0.5" y="0.5" width="12" height="12" fill="#dfe0e8" stroke="#8f91a0"/><rect x="2.500" y="2.500" width="8" height="8" fill="#fff"/><path d="M2 6.500l1.200-1l2.300 3.500c2-4.500 4-7.500 7-10.500l.8.500c-3 3.500-5 7.500-7 13.500h-1.200z" fill="#1a1a30"/></svg>
<div class="t " style="left:296px;top:124px;;letter-spacing:-0.6px">COM</div>
<svg style="left:272px;top:123px" width="17" height="13" viewBox="0 0 17 13"><svg width="17" height="13" style="overflow:hidden;position:static"><path d="M2 2.500c3-1.500 9-1.500 13 0c0 3-1.500 6-3.500 7h-6c-2-1-3.500-4-3.500-7z" fill="#cdd3da" stroke="#8a919e" stroke-width=".8"/><path d="M4 3.500c3-.8 6-.8 9 0M4.500 5.500h8" stroke="#eef1f4" stroke-width="1"/><rect x="6" y="9.500" width="5" height="4" fill="#b9bfc8" stroke="#8a919e" stroke-width=".6"/><path d="M6 11h5M6 12.500h5" stroke="#e4e7eb" stroke-width=".7"/><path d="M1 1v5l2-2M16 1v5l-2-2" stroke="#5f6570" stroke-width=".9" fill="none"/></svg></svg>
<svg style="left:382px;top:123px" width="13" height="13" viewBox="0 0 13 13"><rect x="0.5" y="0.5" width="12" height="12" fill="#dfe0e8" stroke="#8f91a0"/><rect x="2.500" y="2.500" width="8" height="8" fill="#fff"/><path d="M2 6.500l1.200-1l2.300 3.500c2-4.500 4-7.500 7-10.500l.8.500c-3 3.500-5 7.500-7 13.500h-1.200z" fill="#1a1a30"/></svg>
<svg style="left:442px;top:123px" width="13" height="13" viewBox="0 0 13 13"><rect x="0.5" y="0.5" width="12" height="12" fill="#dfe0e8" stroke="#8f91a0"/><rect x="2.500" y="2.500" width="8" height="8" fill="#fff"/><path d="M2 6.500l1.200-1l2.300 3.500c2-4.500 4-7.500 7-10.500l.8.500c-3 3.500-5 7.500-7 13.500h-1.200z" fill="#1a1a30"/></svg>
<div class="a " style="left:268px;top:135px;width:222px;height:20px;background:#ebecf0"></div>
<div class="a " style="left:267px;top:135px;width:224px;height:1px;background:#b9bbc6"></div>
<div class="a " style="left:474px;top:63px;width:16px;height:72px;background:#f4f4f7"></div>
<svg style="left:478px;top:69px" width="7" height="4" viewBox="0 0 7 4"><path d="M0 4L3.5 0L7 4z" fill="#6d6f7d"/></svg>
<svg style="left:478px;top:125px" width="7" height="4" viewBox="0 0 7 4"><path d="M0 0L7 0L3.5 4z" fill="#6d6f7d"/></svg>
<div class="a " style="left:479px;top:80px;width:6px;height:15px;border:1px solid #8f91a0;border-radius:3px;background:linear-gradient(90deg,#f4f4f7,#d5d6de)"></div>
<div class="a lb" style="left:264px;top:215px;width:230px;height:80px;overflow:hidden"></div>
<div class="t " style="left:267.5px;top:219px;;letter-spacing:0.14px">понедельник</div>
<div class="t " style="left:373.5px;top:219px;;letter-spacing:0.12px">0:00-23:59</div>
<div class="a " style="left:265px;top:234px;width:211px;height:1px;background:#d5d7df"></div>
<div class="t " style="left:267.5px;top:238px;">вторник</div>
<div class="t " style="left:373.5px;top:238px;;letter-spacing:0.12px">0:00-23:59</div>
<div class="a " style="left:265px;top:253px;width:211px;height:1px;background:#d5d7df"></div>
<div class="t " style="left:267.5px;top:257px;">среда</div>
<div class="t " style="left:373.5px;top:257px;;letter-spacing:0.12px">0:00-23:59</div>
<div class="a " style="left:265px;top:272px;width:211px;height:1px;background:#d5d7df"></div>
<div class="t " style="left:267.5px;top:276px;">четверг</div>
<div class="t " style="left:373.5px;top:276px;;letter-spacing:0.12px">0:00-23:59</div>
<div class="a " style="left:265px;top:291px;width:211px;height:1px;background:#d5d7df"></div>
<div class="a " style="left:370px;top:216px;width:1px;height:78px;background:#d5d7df"></div>
<div class="a " style="left:476px;top:216px;width:1px;height:78px;background:#d5d7df"></div>
<div class="a " style="left:477px;top:216px;width:16px;height:78px;background:#f4f4f7"></div>
<svg style="left:481px;top:221px" width="7" height="4" viewBox="0 0 7 4"><path d="M0 4L3.5 0L7 4z" fill="#6d6f7d"/></svg>
<svg style="left:481px;top:284px" width="7" height="4" viewBox="0 0 7 4"><path d="M0 0L7 0L3.5 4z" fill="#6d6f7d"/></svg>
<div class="a " style="left:482px;top:232px;width:6px;height:22px;border:1px solid #8f91a0;border-radius:3px;background:linear-gradient(90deg,#f4f4f7,#d5d6de)"></div>
<div class="a lb" style="left:8px;top:371px;width:230px;height:80px;"></div>
<svg style="left:12px;top:373px" width="14" height="17" viewBox="0 0 14 17"><defs><linearGradient id="sf" x1="0" y1="0" x2="1" y2="1"><stop offset="0" stop-color="#fcf1c4"/><stop offset="1" stop-color="#e9c462"/></linearGradient></defs><path d="M1.500 1.500h9.500l1.500 1.500v12.500h-11z" fill="url(#sf)" stroke="#d9b45a" stroke-width=".8"/><path d="M10.500 9c1.500 0 2 1 2 2.500v3" stroke="#fff" stroke-width="1.600" fill="none"/><path d="M11.800 11.500v3" stroke="#4aa8f0" stroke-width="1.100"/></svg>
<div class="t " style="left:31px;top:375px;">C:\</div>
<div class="t " style="left:199px;top:375px;">R</div>
<div class="t " style="left:219px;top:375px;">W</div>
<div class="a " style="left:9px;top:390px;width:228px;height:1px;background:#d5d7df"></div>
<svg style="left:12px;top:392px" width="14" height="17" viewBox="0 0 14 17"><defs><linearGradient id="sf" x1="0" y1="0" x2="1" y2="1"><stop offset="0" stop-color="#fcf1c4"/><stop offset="1" stop-color="#e9c462"/></linearGradient></defs><path d="M1.500 1.500h9.500l1.500 1.500v12.500h-11z" fill="url(#sf)" stroke="#d9b45a" stroke-width=".8"/><path d="M10.500 9c1.500 0 2 1 2 2.500v3" stroke="#fff" stroke-width="1.600" fill="none"/><path d="M11.800 11.500v3" stroke="#4aa8f0" stroke-width="1.100"/></svg>
<div class="t " style="left:31px;top:394px;">D:\</div>
<div class="t " style="left:199px;top:394px;">R</div>
<div class="t " style="left:219px;top:394px;">W</div>
<div class="a " style="left:9px;top:409px;width:228px;height:1px;background:#d5d7df"></div>
<svg style="left:12px;top:411px" width="14" height="17" viewBox="0 0 14 17"><defs><linearGradient id="sf" x1="0" y1="0" x2="1" y2="1"><stop offset="0" stop-color="#fcf1c4"/><stop offset="1" stop-color="#e9c462"/></linearGradient></defs><path d="M1.500 1.500h9.500l1.500 1.500v12.500h-11z" fill="url(#sf)" stroke="#d9b45a" stroke-width=".8"/><path d="M10.500 9c1.500 0 2 1 2 2.500v3" stroke="#fff" stroke-width="1.600" fill="none"/><path d="M11.800 11.500v3" stroke="#4aa8f0" stroke-width="1.100"/></svg>
<div class="t " style="left:31px;top:413px;">C:\Secret</div>
<div class="t " style="left:199px;top:413px;">R</div>
<div class="a lb" style="left:520px;top:371px;width:230px;height:80px;"></div>
<div class="a " style="left:521px;top:390px;width:228px;height:1px;background:#d5d7df"></div>
<div class="a " style="left:521px;top:409px;width:228px;height:1px;background:#d5d7df"></div>
<div class="a " style="left:716px;top:372px;width:1px;height:38px;background:#d5d7df"></div>
<div class="t " style="left:524px;top:375px;;letter-spacing:-0.09px">Запуск консоли СЗИ</div>
<div class="t " style="left:524px;top:394px;;letter-spacing:-0.07px">Администратор АМДЗ</div>
<svg style="left:726px;top:374px" width="13" height="13" viewBox="0 0 13 13"><rect x="0.5" y="0.5" width="12" height="12" fill="#dfe0e8" stroke="#8f91a0"/><rect x="2.500" y="2.500" width="8" height="8" fill="#fff"/><path d="M2 6.500l1.200-1l2.300 3.500c2-4.500 4-7.500 7-10.500l.8.500c-3 3.500-5 7.500-7 13.500h-1.200z" fill="#1a1a30"/></svg>
<svg style="left:726px;top:393px" width="13" height="13" viewBox="0 0 13 13"><rect x="0.5" y="0.5" width="12" height="12" fill="#dfe0e8" stroke="#8f91a0"/><rect x="2.500" y="2.500" width="8" height="8" fill="#fff"/></svg>
</div>
<div class="a " style="left:1344px;top:176px;width:16px;height:422px;background:#f5f5f7"></div>
<svg style="left:1348px;top:181px" width="7" height="4" viewBox="0 0 7 4"><path d="M0 4L3.5 0L7 4z" fill="#6d6f7d"/></svg>
<svg style="left:1348px;top:588px" width="7" height="4" viewBox="0 0 7 4"><path d="M0 0L7 0L3.5 4z" fill="#6d6f7d"/></svg>
<div class="a " style="left:1349px;top:192px;width:6px;height:351px;border:1px solid #8f91a0;border-radius:3px;background:linear-gradient(90deg,#f4f4f7,#d5d6de)"></div>
<div class="a " style="left:443px;top:598px;width:901px;height:16px;background:#f5f5f7"></div>
<div class="a " style="left:460px;top:603px;width:762px;height:6px;border:1px solid #8f91a0;border-radius:3px;background:linear-gradient(#f4f4f7,#d5d6de)"></div>
<svg style="left:449px;top:601.5px" width="4" height="7" viewBox="0 0 4 7"><path d="M4 0L4 7L0 3.5z" fill="#6d6f7d"/></svg>
<svg style="left:1334px;top:601.5px" width="4" height="7" viewBox="0 0 4 7"><path d="M0 0L0 7L4 3.5z" fill="#6d6f7d"/></svg>
<div class="a " style="left:0px;top:620px;width:1366px;height:4px;background:linear-gradient(#e2dfd9 0,#e2dfd9 25%,#fff 25%,#fff 50%,#d4d0c8 50%)"></div></body></html>
